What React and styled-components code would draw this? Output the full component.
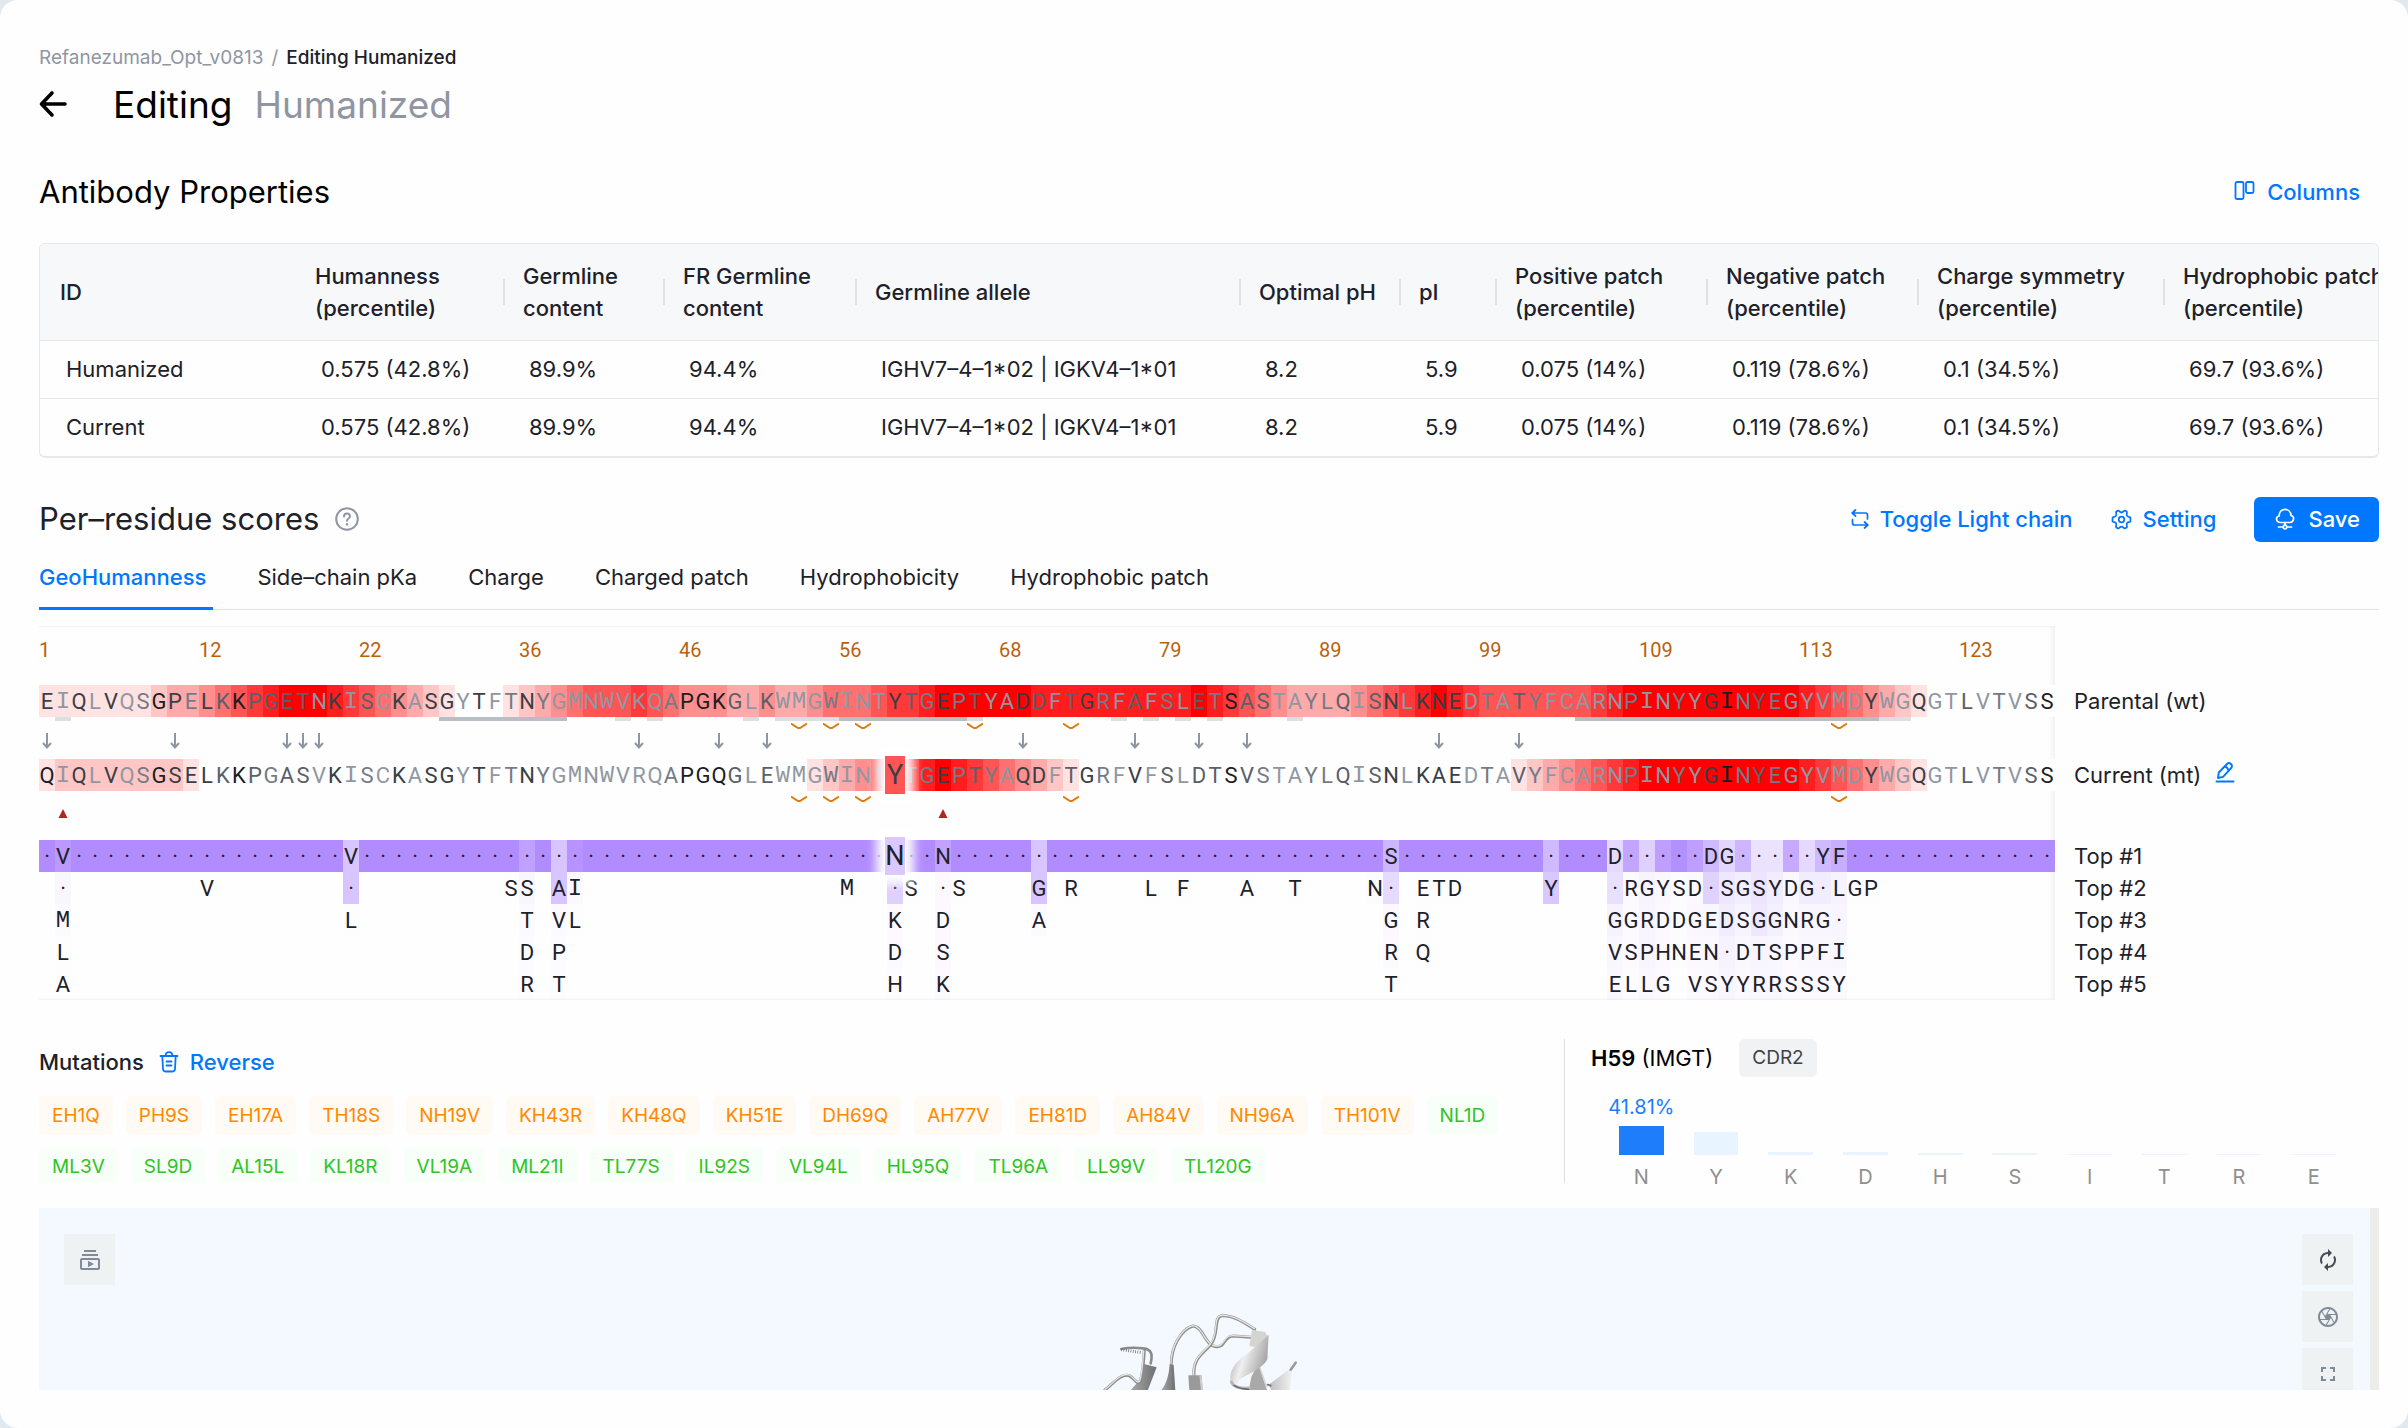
import styled, { createGlobalStyle } from "styled-components";
import { MdAutorenew, MdFullscreen, MdOutlineCamera, MdOutlineSubscriptions } from "react-icons/md";

const GlobalStyle = createGlobalStyle`
  * {
    box-sizing: border-box;
  }

  body {
    margin: 0;
    background: #e2e9ee;
    color: #1d2129;
    font-family: Inter, "Liberation Sans", sans-serif;
    font-size: 22px;
    line-height: 32px;
  }

  h1, h2, h3 {
    margin: 0;
    font-weight: 400;
  }

  button {
    border: 0;
    padding: 0;
    background: none;
    font: inherit;
    color: inherit;
    cursor: pointer;
  }
`;

const Page = styled.main`
  min-height: 100vh;
  padding: 46px 29px 38px 39px;
  border-radius: 18px;
  background: #fefefe;
  overflow: hidden;
`;

const Breadcrumb = styled.nav`
  display: flex;
  gap: 8px;
  font-size: 19px;
  line-height: 24px;
  color: #8f96a1;

  a {
    color: inherit;
    text-decoration: none;
  }

  strong {
    font-weight: 500;
    color: #1d2129;
  }
`;

const TitleBar = styled.header`
  display: flex;
  align-items: center;
  gap: 44px;
  height: 70px;
`;

const BackButton = styled.button`
  display: flex;
  width: 30px;
  color: #000;
`;

const Title = styled.h1`
  display: flex;
  gap: 22px;
  font-size: 37px;
  line-height: 48px;
  color: #000;

  span {
    color: #8f96a1;
  }
`;

const SectionBar = styled.div`
  display: flex;
  align-items: center;
  justify-content: space-between;
  height: ${(props) => props.$height}px;
  padding-top: 20px;
  padding-right: ${(props) => props.$inset || 0}px;
`;

const SectionTitle = styled.h2`
  display: flex;
  align-items: center;
  gap: 16px;
  font-size: 31px;
  line-height: 40px;
  color: ${(props) => props.$color || "#1d2129"};
`;

const Actions = styled.div`
  display: flex;
  align-items: center;
  gap: 38px;
`;

const LinkButton = styled.button`
  display: flex;
  align-items: center;
  gap: 11px;
  font-weight: 500;
  color: #0077ff;
`;

const SaveButton = styled(LinkButton)`
  height: 45px;
  padding: 0 19px 0 21px;
  border-radius: 6px;
  gap: 13px;
  background: #0077ff;
  color: #fff;
`;

const TableFrame = styled.div`
  margin-top: 20px;
  border: 1px solid #e7e8ea;
  border-bottom-width: 2px;
  border-radius: 6px;
  overflow: hidden;
`;

const Table = styled.table`
  width: 2380px;
  table-layout: fixed;
  border-collapse: collapse;
  text-align: left;

  th {
    position: relative;
    height: 96px;
    padding: 0 19px 0 20px;
    border-bottom: 1px solid #e7e8ea;
    background: #f7f8fa;
    font-weight: 500;
    white-space: pre-line;
  }

  th:nth-child(n + 3)::before {
    content: "";
    position: absolute;
    left: 0;
    top: 35px;
    width: 2px;
    height: 26px;
    background: #dfe1e4;
  }

  td {
    height: 58px;
    padding: 0 0 0 26px;
    white-space: nowrap;
  }

  tbody tr:first-child td {
    border-bottom: 1px solid #e7e8ea;
  }
`;

const Tabs = styled.div`
  display: flex;
  gap: 44px;
  border-bottom: 1px solid #dfe0e2;
`;

const Tab = styled.button`
  height: 50px;
  padding: 1px 7px 14px 0;
  margin-bottom: -1px;
  border-bottom: 3px solid ${(props) => (props.$active ? "#0077ff" : "transparent")};
  color: ${(props) => (props.$active ? "#0077ff" : "inherit")};
  font-weight: ${(props) => (props.$active ? 500 : 400)};
`;

const Alignment = styled.div`
  display: flex;
  gap: 19px;
  margin-top: 16px;
`;

const Sequences = styled.div`
  flex: none;
  font-family: Roboto, "Liberation Sans", sans-serif;
  box-shadow: inset -6px 0 8px -6px #e6e6e6, inset 0 3px 2px -2px #f4f4f4, inset 0 -3px 2px -2px #f4f4f4;
`;

const Strip = styled.div`
  display: grid;
  grid-template-columns: repeat(126, 16px);
  height: ${(props) => props.$height || 32}px;
  margin-bottom: ${(props) => props.$after || 0}px;
`;

const Ruler = styled.div`
  display: grid;
  grid-template-columns: repeat(12, 160px) 96px;
  height: 59px;
  padding-top: 8px;
  font-size: 20px;
  color: #b8620e;
`;

// M, W and I only sit well in a narrow column when they come from a monospaced face
const Cell = styled.span`
  position: relative;
  display: flex;
  justify-content: center;
  height: 32px;
  font-family: ${(props) => (props.$fixed ? '"Liberation Mono", monospace' : "inherit")};
  font-size: ${(props) => (props.$fixed ? 24 : 22)}px;
  line-height: 33px;
  color: ${(props) => props.$ink};
  background: ${(props) => props.$fill};
`;

const PickedCell = styled(Cell)`
  z-index: 1;
  height: 38px;
  margin: -3px -2px;
  font-size: 27px;
  line-height: 38px;
  box-shadow: 0 0 0 1px #ffffffb0, 0 0 9px 9px #fffffff0;
`;

const Underline = styled.i`
  height: 4px;
  background: ${(props) => (props.$cdr ? "#b8bec4" : "#dbe0e3")};
`;

const Labels = styled.div`
  display: flex;
  flex-direction: column;
  padding-top: 59px;
`;

const Label = styled.div`
  display: flex;
  align-items: center;
  gap: 14px;
  height: 32px;
  margin-bottom: ${(props) => props.$after || 0}px;
`;

const Details = styled.section`
  display: grid;
  grid-template-columns: 1525fr 815fr;
  grid-template-rows: 144px;
  margin-top: 39px;
`;

const Mutations = styled.div`
  overflow: hidden;
`;

const MutationsHead = styled.div`
  display: flex;
  align-items: center;
  gap: 15px;
  height: 45px;

  h3 {
    font-size: 22px;
    font-weight: 500;
  }
`;

const Tags = styled.div`
  display: flex;
  flex-wrap: wrap;
  gap: 12px 13px;
  margin-top: 12px;
  padding-right: 20px;
`;

const Tag = styled.span`
  height: 39px;
  padding: 0 13px;
  border-radius: 6px;
  font-size: 19px;
  line-height: 39px;
  color: ${(props) => (props.$heavy ? "#ff8800" : "#2fc424")};
  background: ${(props) => (props.$heavy ? "#fffaf3" : "#f8fef8")};
`;

const Residue = styled.div`
  padding-left: 26px;
  border-left: 1px solid #dcdee0;
`;

const ResidueHead = styled.div`
  display: flex;
  align-items: center;
  gap: 26px;
  color: #000;

  h3 {
    font-size: 22px;
  }

  b {
    font-weight: 600;
  }
`;

const Region = styled.span`
  padding: 0 13px;
  border-radius: 6px;
  font-size: 19px;
  line-height: 38px;
  color: #3d4148;
  background: #f1f2f4;
`;

const Chart = styled.div`
  display: flex;
  height: 122px;
  margin: 0 28px 0 13px;
`;

const Column = styled.div`
  display: flex;
  flex: 1;
  flex-direction: column;
  align-items: center;
  justify-content: flex-end;
  font-size: 20px;
  line-height: 44px;
  color: #8f8f8f;

  output {
    line-height: 38px;
    color: #1d7dfa;
  }
`;

const Bar = styled.div`
  width: 60%;
  background: ${(props) => (props.$active ? "#1d7dfa" : "#e8f4ff")};
`;

const Viewer = styled.section`
  display: flex;
  justify-content: space-between;
  height: 182px;
  margin-top: 25px;
  padding: 26px 17px 0 25px;
  border-right: 9px solid #ecede8;
  background: #f4f9ff;
  overflow: hidden;
`;

const ViewerTools = styled.div`
  display: flex;
  flex-direction: column;
  gap: 6px;
`;

const ViewerButton = styled.button`
  display: flex;
  flex: none;
  align-items: center;
  justify-content: center;
  width: 51px;
  height: 51px;
  background: #eef2f3;
  color: ${(props) => (props.$dark ? "#444b54" : "#808a99")};
  font-size: 24px;
`;

const Protein = styled.svg`
  align-self: flex-end;
  width: 220px;
  height: 90px;
`;

const columns = [
  ["ID", 255],
  ["Humanness\n(percentile)", 208],
  ["Germline\ncontent", 160],
  ["FR Germline\ncontent", 192],
  ["Germline allele", 384],
  ["Optimal pH", 160],
  ["pI", 96],
  ["Positive patch\n(percentile)", 211],
  ["Negative patch\n(percentile)", 211],
  ["Charge symmetry\n(percentile)", 246],
  ["Hydrophobic patch\n(percentile)", 257],
];

const scores = ["0.575 (42.8%)", "89.9%", "94.4%", "IGHV7–4–1*02 | IGKV4–1*01", "8.2", "5.9", "0.075 (14%)", "0.119 (78.6%)", "0.1 (34.5%)", "69.7 (93.6%)"];

const tabs = ["GeoHumanness", "Side–chain pKa", "Charge", "Charged patch", "Hydrophobicity", "Hydrophobic patch"];

const ruler = [1, 12, 22, 36, 46, 56, 68, 79, 89, 99, 109, 113, 123];

const SELECTED = 54;

const blocks = (text) => text.replaceAll(" ", "");

// seq: residues, heat: 0 (none) to 9 (strongest), ink: a (exposed) to e (buried)
const parental = {
  seq: blocks("EIQLVQSGPE LKKPGETNKI SCKASGYTFT NYGMNWVKQA PGKGLKWMGW INTYTGEPTY ADDFTGRFAF SLETSASTAY LQISNLKNED TATYFCARNP INYYGINYEG YVMDYWGQGT LVTVSS"),
  heat: blocks("1111111233 4567899987 6543210001 2345666765 4443343345 5567789999 9988888888 8898765433 3345678987 6666666789 9999999999 8765432100 000000"),
  ink: blocks("bebebedabd bcaccccebe cebebbebed bdeeeeeeed aaaceceeed eeebcdbdce ebcecbdece decdacceed dcecbebbbe decdeeeeed eedebadcde eeeebeebee cedeca"),
};

const current = {
  seq: blocks("QIQLVQSGSE LKKPGASVKI SCKASGYTFT NYGMNWVRQA PGQGLEWMGW INTYTGEPTY AQDFTGRFVF SLDTSVSTAY LQISNLKAED TAVYFCARNP INYYGINYEG YVMDYWGQGT LVTVSS"),
  heat: blocks("1222222221 0000000000 0000000000 0000000000 0000000012 3456789876 5432100000 0000000000 0000000000 0012345678 9999999999 8765432100 000000"),
  ink: blocks("aebebedabb bcacdccebe debebbebed bdeeeeeeed aaaceceeed eeebedbdcd ebbecbdebe ceccacdeed dcecbebbbe decdeeeeed eedebadcde eeeebeebee cedeca"),
};

const inks = { a: "#1b1d22", b: "#3a3e45", c: "#5a6069", d: "#747b86", e: "#9097a2" };

const arrows = [1, 9, 16, 17, 18, 38, 43, 46, 62, 69, 73, 76, 88, 93];
const parentalLiabilities = [48, 50, 52, 59, 65, 113];
const currentLiabilities = [48, 50, 52, 65, 113];
const warnings = [2, 57];

// [first, last, inside a CDR]
const underlines = [
  [2, 2], [26, 33, true], [37, 37], [39, 39], [45, 45], [47, 50], [51, 58, true], [59, 59],
  [68, 68], [70, 70], [72, 72], [74, 74], [79, 79], [97, 115, true], [116, 117],
];

// position: letter and probability in percent
const run = (start, letters, values) =>
  Object.fromEntries([...letters].map((letter, i) => [start + i, [letter, values[i]]]));

const topOne = {
  2: ["V", 88], 20: ["V", 50], 31: ["·", 82], 33: ["·", 50], 34: ["·", 94], 54: ["N", 48], 57: ["N", 80],
  63: ["·", 50], 85: ["S", 64], 95: ["·", 60],
  ...run(99, "D·····DG·····YF", [32, 78, 40, 84, 97, 84, 60, 36, 63, 24, 24, 74, 32, 60, 70]),
};
for (let i = 1; i <= 126; i++) {
  topOne[i] = topOne[i] || ["·", 100];
}

const tops = [
  topOne,
  {
    2: ["·", 6], 11: ["V", 0], 20: ["·", 50], 30: ["S", 1], 31: ["S", 6], 33: ["A", 50], 34: ["I", 4],
    51: ["M", 1], 54: ["·", 40], 55: ["S", 1], 57: ["·", 4], 58: ["S", 1], 63: ["G", 50], 65: ["R", 1],
    70: ["L", 1], 72: ["F", 1], 76: ["A", 1], 79: ["T", 1], 84: ["N", 2], 85: ["·", 30],
    87: ["E", 1], 88: ["T", 1], 89: ["D", 1], 95: ["Y", 47],
    ...run(99, "·RGYSD·SGSYDG·LGP", [27, 3, 9, 5, 2, 4, 38, 20, 14, 22, 16, 5, 15, 15, 10, 1, 1]),
  },
  {
    2: ["M", 3], 20: ["L", 1], 31: ["T", 3], 33: ["V", 3], 34: ["L", 1], 54: ["K", 3], 57: ["D", 4],
    63: ["A", 3], 85: ["G", 4], 87: ["R", 1],
    ...run(99, "GGRDDGEDSGGNRG·", [10, 3, 8, 4, 2, 5, 6, 15, 9, 20, 12, 4, 6, 6, 8]),
  },
  {
    2: ["L", 1], 31: ["D", 2], 33: ["P", 2], 54: ["D", 3], 57: ["S", 4], 85: ["R", 3], 87: ["Q", 1],
    ...run(99, "VSPHNEN·DTSPPFI", [7, 3, 8, 4, 2, 4, 4, 10, 5, 8, 7, 3, 5, 5, 6]),
  },
  {
    2: ["A", 1], 31: ["R", 2], 33: ["T", 2], 54: ["H", 2], 57: ["K", 3], 85: ["T", 1],
    ...run(99, "ELLG VSYYRRSSSY", [5, 2, 5, 3, 0, 3, 4, 8, 4, 6, 7, 3, 4, 4, 4]),
  },
];

const heavyTags = "EH1Q PH9S EH17A TH18S NH19V KH43R KH48Q KH51E DH69Q AH77V EH81D AH84V NH96A TH101V".split(" ");
const lightTags = "NL1D ML3V SL9D AL15L KL18R VL19A ML21I TL77S IL92S VL94L HL95Q TL96A LL99V TL120G".split(" ");

const frequencies = [["N", 29], ["Y", 23], ["K", 3], ["D", 3], ["H", 2], ["S", 2], ["I", 1], ["T", 1], ["R", 1], ["E", 1]];

const isFixed = (letter) => "MWI".includes(letter);
const red = (level) => (level > 0 ? `rgb(255 ${255 - Math.round(level * 28.3)} ${255 - Math.round(level * 28.3)})` : "#fefefe");
const purple = (percent) => (percent > 0 ? `rgb(177 140 255 / ${percent}%)` : "transparent");

function Residues({ track, selected }) {
  return (
    <Strip>
      {[...track.seq].map((letter, i) => {
        const Box = i + 1 === selected ? PickedCell : Cell;
        return (
          <Box key={i} $fixed={isFixed(letter)} $ink={inks[track.ink[i]]} $fill={red(Number(track.heat[i]))}>
            {letter}
          </Box>
        );
      })}
    </Strip>
  );
}

function Candidates({ row, selected }) {
  return (
    <Strip>
      {Object.entries(row).map(([position, [letter, percent]]) => {
        const picked = Number(position) === selected;
        const Box = picked ? PickedCell : Cell;
        return (
          <Box
            key={position}
            style={{ gridColumn: Number(position), gridRow: 1 }}
            $fixed={isFixed(letter)}
            $ink="#1d2129"
            $fill={picked ? "#dac8ff" : purple(percent)}
          >
            {letter}
          </Box>
        );
      })}
    </Strip>
  );
}

function Marks({ at, height, after, children }) {
  return (
    <Strip $height={height} $after={after}>
      {at.map((position) => (
        <svg key={position} width="16" height={height} style={{ gridColumn: position, gridRow: 1 }} fill="none">
          {children}
        </svg>
      ))}
    </Strip>
  );
}

const Chevron = <path d="M0 1.5 L7 6 H9 L16 1.5" stroke="#e07b0c" strokeWidth="2" />;

function BackIcon() {
  return (
    <svg width="30" height="30" viewBox="0 0 30 30" fill="none" stroke="currentColor" strokeWidth="3.6" strokeLinecap="round" strokeLinejoin="round">
      <path d="M26 14H3M13 3L2.500 14L13 25" />
    </svg>
  );
}

function ColumnsIcon() {
  return (
    <svg width="22" height="22" viewBox="0 0 22 22" fill="none" stroke="currentColor" strokeWidth="1.8">
      <rect x="1.500" y="1" width="8" height="17" rx="1.500" />
      <rect x="12" y="1" width="7.500" height="11" rx="1.500" />
    </svg>
  );
}

function HelpIcon() {
  return (
    <svg width="24" height="24" viewBox="0 0 24 24" fill="none" stroke="#8f96a1" strokeWidth="2" strokeLinecap="round">
      <circle cx="12" cy="12" r="10.800" />
      <path d="M9 9.500C9 5.400 15 5.600 15 9.300C15 11.600 12 11.400 12 13.800" />
      <path d="M12 17.200V17.400" strokeWidth="2.400" />
    </svg>
  );
}

function ToggleIcon() {
  return (
    <svg width="18" height="20" viewBox="0 0 18 20" fill="none" stroke="currentColor" strokeWidth="1.7" strokeLinecap="round" strokeLinejoin="round">
      <path d="M4.500 1L1.200 4L4.500 7M1.500 4H14.500Q16.500 4 16.500 6V10M13.500 13L16.800 16L13.500 19M16.500 16H3.500Q1.500 16 1.500 14V10.500" />
    </svg>
  );
}

function SettingIcon() {
  return (
    <svg width="21" height="21" viewBox="0 0 24 24" fill="none" stroke="currentColor" strokeWidth="2" strokeLinejoin="round">
      <path d="M8.200 1.800C9.600 1.600 10 4 12 4S14.400 1.600 15.800 1.800L18 3C19 4.200 17.200 5.800 18.200 7.600S21.600 8.400 22.200 9.800V14.200C21.600 15.600 19.200 14.600 18.200 16.400S19 19.800 18 21L15.800 22.200C14.400 22.400 14 20 12 20S9.600 22.400 8.200 22.200L6 21C5 19.800 6.800 18.200 5.800 16.400S2.400 15.600 1.800 14.200V9.800C2.400 8.400 4.800 9.400 5.800 7.600S5 4.200 6 3Z" />
      <circle cx="12" cy="12" r="3.200" />
    </svg>
  );
}

function CloudIcon() {
  return (
    <svg width="20" height="22" viewBox="0 0 20 22" fill="none" stroke="currentColor" strokeWidth="1.7" strokeLinecap="round">
      <path d="M5 14.500C.5 14 .500 8.500 4.200 8C4 -.5 15.500 -.8 16 7.500C19.800 8.500 19.300 14 15 14.500Z" strokeLinejoin="round" />
      <path d="M10 14.500V17M3.500 19H7.500M12.500 19H16.500" />
      <circle cx="10" cy="19" r="1.800" />
    </svg>
  );
}

function PenIcon() {
  return (
    <svg width="20" height="22" viewBox="0 0 20 22" fill="none" stroke="#0077ff" strokeWidth="1.9" strokeLinecap="round" strokeLinejoin="round">
      <path d="M3 17L3.800 11.500L12 3C14.500 .5 18.500 4 16.200 7L8 15.800ZM9.800 5.500Q12.500 6.200 13.500 9.500" />
      <path d="M1.500 20.500H18.500" strokeWidth="2" />
    </svg>
  );
}

function TrashIcon() {
  return (
    <svg width="20" height="22" viewBox="0 0 20 22" fill="none" stroke="currentColor" strokeWidth="1.8" strokeLinecap="round" strokeLinejoin="round">
      <path d="M1.500 5H18.500M6.500 5Q6.500 1.200 10 1.200T13.500 5M3.300 5L4 18Q4.200 20.500 6.500 20.500H13.500Q15.800 20.500 16 18L16.700 5M7.500 10.500H12.500M7.500 14.500H12.500" />
    </svg>
  );
}

function Structure() {
  return (
    <Protein viewBox="27 0 660 270" fill="none" strokeLinecap="round" strokeLinejoin="round" role="img" aria-label="Antibody structure">
      <defs>
        <linearGradient id="helix" x1="0" y1="0" x2="1" y2="0.4">
          <stop offset="0" stopColor="#9c9c9c" />
          <stop offset="0.45" stopColor="#efefef" />
          <stop offset="1" stopColor="#a2a2a2" />
        </linearGradient>
        <linearGradient id="strand" x1="0" y1="0" x2="1" y2="0">
          <stop offset="0" stopColor="#a9a9a9" />
          <stop offset="1" stopColor="#6f6f6f" />
        </linearGradient>
        <linearGradient id="pale" x1="0" y1="0" x2="1" y2="0">
          <stop offset="0" stopColor="#bdbdbd" />
          <stop offset="1" stopColor="#f2f2f2" />
        </linearGradient>
      </defs>
      <path d="M182 190C188 166 186 147 160 145C135 142 112 143 94 147" stroke="#8b8b8b" strokeWidth="8" />
      <path d="M94 149L156 158" stroke="#5e5e5e" strokeWidth="9" strokeDasharray="2 5" strokeLinecap="butt" />
      <path d="M162 192L200 202L173 272H120L150 240Z" fill="url(#strand)" />
      <path d="M45 270C70 250 95 218 118 227C136 236 140 256 150 245C160 220 160 180 163 153" stroke="#8a8a8a" strokeWidth="9" />
      <path d="M45 269C70 248 95 216 118 225C136 234 140 254 149 243C158 218 158 180 161 153" stroke="#e3e3e0" strokeWidth="4" />
      <path d="M239 192L251 194L256 272H213Q236 245 239 192Z" fill="url(#strand)" />
      <path d="M244 190C244 145 270 90 308 78C340 78 345 138 378 140C408 142 400 108 430 108L482 112" stroke="#8e8e8e" strokeWidth="9" />
      <path d="M243 190C243 145 269 89 307 77C339 77 344 136 377 138C406 140 398 106 429 107L482 110" stroke="#e6e6e2" strokeWidth="4" />
      <path d="M312 226C308 175 340 160 362 134C388 105 370 55 392 48C425 43 462 67 494 88" stroke="#8e8e8e" strokeWidth="9" />
      <path d="M311 226C307 174 339 159 361 132C386 104 369 54 391 47C424 42 461 65 493 86" stroke="#e6e6e2" strokeWidth="4" />
      <path d="M295 226H335L338 272H298Z" fill="#9a9a9a" />
      <path d="M328 226H335L338 272H333Z" fill="#cfcfcf" />
      <path d="M505 190L528 262L532 272H476L484 230Z" fill="#a9a9a9" />
      <path d="M507 195L530 260" stroke="#d6d6d6" strokeWidth="4" />
      <path d="M486 90L525 96L535 112L500 142L478 138Z" fill="#d4d4d2" />
      <path d="M536 104L532 178C520 205 470 225 446 240Q440 252 447 262L424 250C412 215 440 182 470 163Z" fill="url(#helix)" />
      <path d="M424 246C430 262 450 266 478 264" stroke="#b5b5b5" strokeWidth="9" />
      <path d="M432 256C448 268 460 266 476 268" stroke="#606060" strokeWidth="4" />
      <path d="M536 254L598 208L606 214L599 272H545Z" fill="url(#pale)" />
      <path d="M602 209L617 188" stroke="#9c9c9c" strokeWidth="8" />
      <path d="M533 254L542 257" stroke="#777" strokeWidth="6" />
    </Protein>
  );
}

export default function App() {
  return (
    <>
      <GlobalStyle />
      <Page>
        <Breadcrumb>
          <a href="#project">Refanezumab_Opt_v0813</a>
          <span>/</span>
          <strong>Editing Humanized</strong>
        </Breadcrumb>
        <TitleBar>
          <BackButton aria-label="Back">
            <BackIcon />
          </BackButton>
          <Title>
            Editing <span>Humanized</span>
          </Title>
        </TitleBar>

        <SectionBar $height={83} $inset={19}>
          <SectionTitle $color="#000">Antibody Properties</SectionTitle>
          <LinkButton>
            <ColumnsIcon />
            Columns
          </LinkButton>
        </SectionBar>
        <TableFrame>
          <Table>
            <colgroup>
              {columns.map(([name, width]) => (
                <col key={name} style={{ width }} />
              ))}
            </colgroup>
            <thead>
              <tr>
                {columns.map(([name]) => (
                  <th key={name}>{name}</th>
                ))}
              </tr>
            </thead>
            <tbody>
              {["Humanized", "Current"].map((id) => (
                <tr key={id}>
                  <td>{id}</td>
                  {scores.map((score) => (
                    <td key={score}>{score}</td>
                  ))}
                </tr>
              ))}
            </tbody>
          </Table>
        </TableFrame>

        <SectionBar $height={102}>
          <SectionTitle>
            Per–residue scores
            <HelpIcon />
          </SectionTitle>
          <Actions>
            <LinkButton>
              <ToggleIcon />
              Toggle Light chain
            </LinkButton>
            <LinkButton>
              <SettingIcon />
              Setting
            </LinkButton>
            <SaveButton>
              <CloudIcon />
              Save
            </SaveButton>
          </Actions>
        </SectionBar>
        <Tabs role="tablist">
          {tabs.map((tab, i) => (
            <Tab key={tab} role="tab" aria-selected={i === 0} $active={i === 0}>
              {tab}
            </Tab>
          ))}
        </Tabs>

        <Alignment>
          <Sequences>
            <Ruler>
              {ruler.map((n) => (
                <span key={n}>{n}</span>
              ))}
            </Ruler>
            <Residues track={parental} />
            <Strip $height={4} $after={1}>
              {underlines.map(([first, last, cdr]) => (
                <Underline key={first} $cdr={cdr} style={{ gridColumn: `${first} / ${last + 1}`, gridRow: 1 }} />
              ))}
            </Strip>
            <Marks at={parentalLiabilities} height={8} after={3}>
              {Chevron}
            </Marks>
            <Marks at={arrows} height={16} after={10}>
              <path d="M8 0V14M4 10L8 14.500L12 10" stroke="#8f96a1" strokeWidth="2" />
            </Marks>
            <Residues track={current} selected={SELECTED} />
            <Strip $height={4} />
            <Marks at={currentLiabilities} height={8} after={6}>
              {Chevron}
            </Marks>
            <Marks at={warnings} height={9} after={22}>
              <path d="M8 0L12.500 9H3.500Z" fill="#b3261e" />
            </Marks>
            {tops.map((row, i) => (
              <Candidates key={i} row={row} selected={i === 0 ? SELECTED : undefined} />
            ))}
          </Sequences>
          <Labels>
            <Label $after={42}>Parental (wt)</Label>
            <Label $after={49}>
              Current (mt)
              <button aria-label="Edit current sequence">
                <PenIcon />
              </button>
            </Label>
            {tops.map((row, i) => (
              <Label key={i}>Top #{i + 1}</Label>
            ))}
          </Labels>
        </Alignment>

        <Details>
          <Mutations>
            <MutationsHead>
              <h3>Mutations</h3>
              <LinkButton>
                <TrashIcon />
                Reverse
              </LinkButton>
            </MutationsHead>
            <Tags>
              {heavyTags.map((tag) => (
                <Tag key={tag} $heavy>
                  {tag}
                </Tag>
              ))}
              {lightTags.map((tag) => (
                <Tag key={tag}>{tag}</Tag>
              ))}
            </Tags>
          </Mutations>
          <Residue>
            <ResidueHead>
              <h3>
                <b>H59</b> (IMGT)
              </h3>
              <Region>CDR2</Region>
            </ResidueHead>
            <Chart>
              {frequencies.map(([letter, height], i) => (
                <Column key={letter}>
                  {i === 0 && <output>41.81%</output>}
                  <Bar $active={i === 0} style={{ height }} />
                  {letter}
                </Column>
              ))}
            </Chart>
          </Residue>
        </Details>

        <Viewer>
          <ViewerTools>
            <ViewerButton aria-label="Show tree">
              <MdOutlineSubscriptions />
            </ViewerButton>
          </ViewerTools>
          <Structure />
          <ViewerTools>
            <ViewerButton $dark aria-label="Reset camera">
              <MdAutorenew />
            </ViewerButton>
            <ViewerButton aria-label="Screenshot">
              <MdOutlineCamera />
            </ViewerButton>
            <ViewerButton aria-label="Full screen">
              <MdFullscreen />
            </ViewerButton>
          </ViewerTools>
        </Viewer>
      </Page>
    </>
  );
}
